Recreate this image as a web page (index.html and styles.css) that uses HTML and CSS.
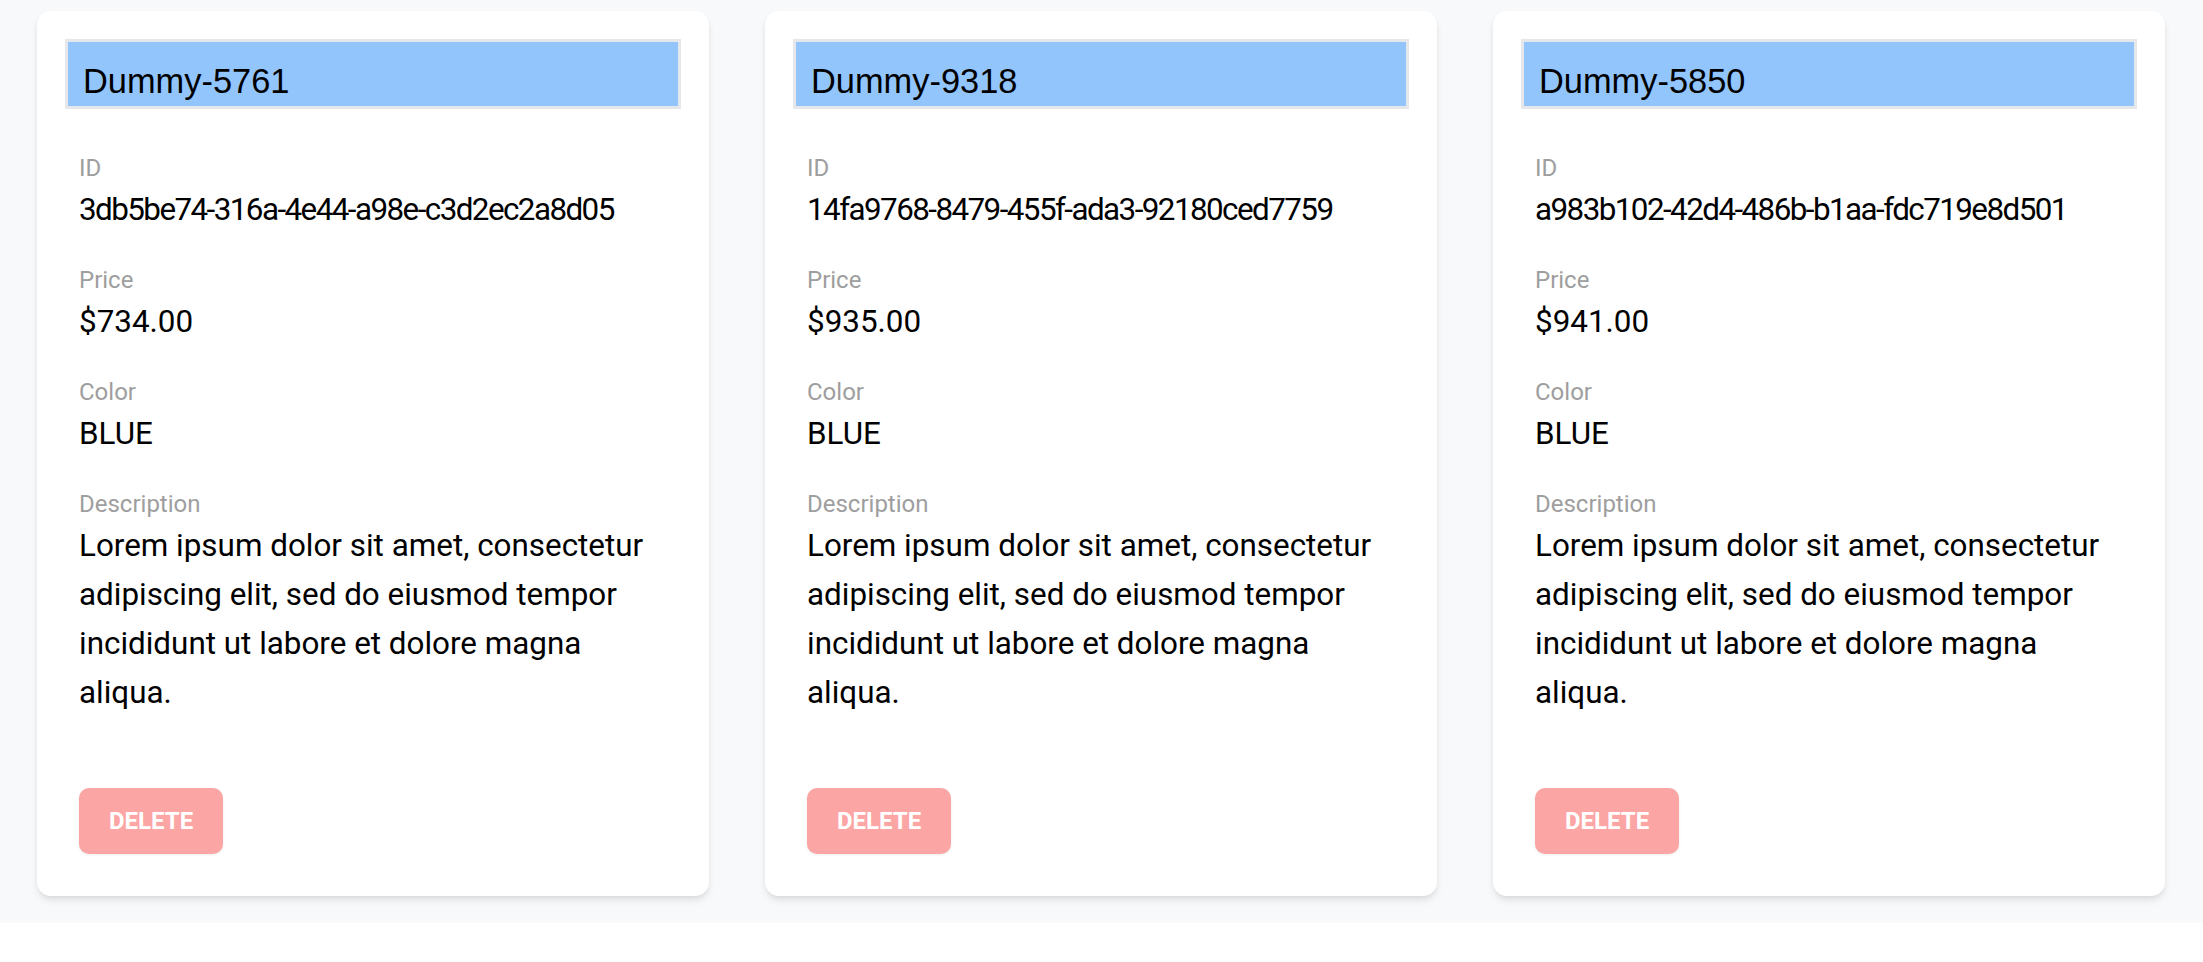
FILE: index.html
```html
<!DOCTYPE html>
<html lang="en">
<head>
<meta charset="utf-8">
<title>Products</title>
<link rel="stylesheet" href="styles.css">
</head>
<body>
<main class="page">
  <div class="grid">
    <article class="card">
      <div class="name-field">Dummy-5761</div>
      <div class="body">
        <div class="field">
          <div class="label">ID</div>
          <div class="value id">3db5be74-316a-4e44-a98e-c3d2ec2a8d05</div>
        </div>
        <div class="field">
          <div class="label">Price</div>
          <div class="value">$734.00</div>
        </div>
        <div class="field">
          <div class="label">Color</div>
          <div class="value">BLUE</div>
        </div>
        <div class="field">
          <div class="label">Description</div>
          <div class="value">Lorem ipsum dolor sit amet, consectetur adipiscing elit, sed do eiusmod tempor incididunt ut labore et dolore magna aliqua.</div>
        </div>
        <button class="delete" type="button">Delete</button>
      </div>
    </article>
    <article class="card">
      <div class="name-field">Dummy-9318</div>
      <div class="body">
        <div class="field">
          <div class="label">ID</div>
          <div class="value id">14fa9768-8479-455f-ada3-92180ced7759</div>
        </div>
        <div class="field">
          <div class="label">Price</div>
          <div class="value">$935.00</div>
        </div>
        <div class="field">
          <div class="label">Color</div>
          <div class="value">BLUE</div>
        </div>
        <div class="field">
          <div class="label">Description</div>
          <div class="value">Lorem ipsum dolor sit amet, consectetur adipiscing elit, sed do eiusmod tempor incididunt ut labore et dolore magna aliqua.</div>
        </div>
        <button class="delete" type="button">Delete</button>
      </div>
    </article>
    <article class="card">
      <div class="name-field">Dummy-5850</div>
      <div class="body">
        <div class="field">
          <div class="label">ID</div>
          <div class="value id">a983b102-42d4-486b-b1aa-fdc719e8d501</div>
        </div>
        <div class="field">
          <div class="label">Price</div>
          <div class="value">$941.00</div>
        </div>
        <div class="field">
          <div class="label">Color</div>
          <div class="value">BLUE</div>
        </div>
        <div class="field">
          <div class="label">Description</div>
          <div class="value">Lorem ipsum dolor sit amet, consectetur adipiscing elit, sed do eiusmod tempor incididunt ut labore et dolore magna aliqua.</div>
        </div>
        <button class="delete" type="button">Delete</button>
      </div>
    </article>
  </div>
</main>
</body>
</html>
```
FILE: styles.css
```css
* { box-sizing: border-box; }

html, body {
  margin: 0;
  background: #ffffff;
  font-family: Roboto, "Liberation Sans", sans-serif;
}

.page {
  background: #f8f9fb;
  padding: 11px 38px 27px 37px;
}

.grid {
  display: grid;
  grid-template-columns: repeat(3, 1fr);
  column-gap: 56px;
}

.card {
  background: #ffffff;
  border-radius: 14px;
  padding: 28px;
  box-shadow: 0 5px 9px -1px rgba(0, 0, 0, 0.09), 0 3px 6px -2px rgba(0, 0, 0, 0.07);
  display: flex;
  flex-direction: column;
}

.name-field {
  height: 70px;
  border: 3px solid #e5e7eb;
  background: #93c5fd;
  font-family: "Liberation Sans", Arial, sans-serif;
  font-size: 34.4px;
  line-height: 50px;
  padding: 14px 15px 0;
  color: #000000;
  white-space: nowrap;
  overflow: hidden;
}

.body {
  padding: 46px 14px 14px;
  display: flex;
  flex-direction: column;
  align-items: flex-start;
}

.field {
  margin-bottom: 33px;
}

.field:last-of-type {
  margin-bottom: 0;
}

.label {
  font-size: 24px;
  line-height: 26px;
  color: #9e9e9e;
  margin-bottom: 4px;
}

.value {
  font-size: 31.4px;
  line-height: 49px;
  color: #000000;
}

.value.id {
  letter-spacing: -0.05em;
}

.delete {
  margin-top: 71px;
  height: 66px;
  padding: 0 30px;
  border: none;
  border-radius: 10px;
  background: #fca5a5;
  color: #ffffff;
  font-family: Roboto, "Liberation Sans", sans-serif;
  font-weight: 700;
  font-size: 24px;
  text-transform: uppercase;
  box-shadow: 0 1px 3px rgba(0, 0, 0, 0.08);
  cursor: pointer;
}
```
